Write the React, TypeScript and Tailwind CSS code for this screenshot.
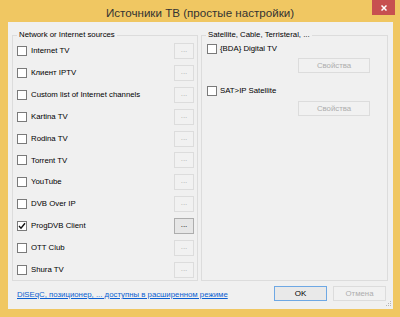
import React from 'react';

const networkSources = [
  { name: 'Internet TV', checked: false },
  { name: 'Клиент IPTV', checked: false },
  { name: 'Custom list of Internet channels', checked: false },
  { name: 'Kartina TV', checked: false },
  { name: 'Rodina TV', checked: false },
  { name: 'Torrent TV', checked: false },
  { name: 'YouTube', checked: false },
  { name: 'DVB Over IP', checked: false },
  { name: 'ProgDVB Client', checked: true },
  { name: 'OTT Club', checked: false },
  { name: 'Shura TV', checked: false },
];

function CheckBox({ checked }: { checked: boolean }) {
  return (
    <span className="flex h-[10px] w-[10px] shrink-0 items-center justify-center border border-[#7a7a7a] bg-white">
      {checked && (
        <svg width="8" height="8" viewBox="0 0 8 8">
          <path d="M1 4 L3 6.2 L7 1.2" fill="none" stroke="#111" strokeWidth="1.4" />
        </svg>
      )}
    </span>
  );
}

function DotsButton({ enabled }: { enabled: boolean }) {
  return (
    <button
      type="button"
      className={
        enabled
          ? 'flex h-[16px] w-[20px] items-center justify-center border border-[#adadad] bg-[#e6e6e6] pb-[2px] text-[8px] leading-none text-black'
          : 'flex h-[16px] w-[20px] items-center justify-center border border-[#dcdcdc] bg-[#f1f1f1] pb-[2px] text-[8px] leading-none text-[#b0b0b0]'
      }
    >
      ...
    </button>
  );
}

function PropsButton() {
  return (
    <button
      type="button"
      className="flex h-[15px] w-[72px] items-center justify-center border border-[#dcdcdc] bg-[#f1f1f1] text-[7.8px] leading-none text-[#adadad]"
    >
      Свойства
    </button>
  );
}

export default function App() {
  return (
    <div
      className="flex h-[317px] w-[400px] flex-col bg-[#f0c762]"
      style={{ fontFamily: '"Liberation Sans", Arial, sans-serif' }}
    >
      {/* Title bar */}
      <div className="relative flex h-[22px] shrink-0 items-center justify-center pt-[3px]">
        <span className="text-[11.6px] leading-none text-[#333]">Источники ТВ (простые настройки)</span>
        <div className="absolute right-[5px] top-0 flex h-[15px] w-[23px] items-center justify-center bg-[#c75050]">
          <svg width="6" height="6" viewBox="0 0 6 6">
            <path d="M0.5 0.5 L5.5 5.5 M5.5 0.5 L0.5 5.5" stroke="#fff" strokeWidth="1.5" />
          </svg>
        </div>
      </div>

      {/* Client area */}
      <div className="relative mx-[7px] mb-[8px] ml-[8px] flex flex-1 flex-col bg-[#f0f0f0] pl-[4px] pr-[5px] pt-[8px] text-[7.8px] text-black">
        <div className="flex gap-[3px]">
          {/* Network sources */}
          <fieldset className="h-[251px] w-[186px] border border-[#dcdcdc] pl-[4px] pr-[3px]">
            <legend className="px-[2px] leading-[10px]">Network or Internet sources</legend>
            {networkSources.map((s) => (
              <div key={s.name} className="flex h-[21.9px] items-center">
                <CheckBox checked={s.checked} />
                <span className="ml-[4px] flex-1 leading-none">{s.name}</span>
                <DotsButton enabled={s.checked} />
              </div>
            ))}
          </fieldset>

          {/* Satellite */}
          <fieldset className="h-[251px] w-[187px] border border-[#dcdcdc] pl-[4px] pr-[17px]">
            <legend className="px-[2px] leading-[10px]">Satellite, Cable, Terristeral, ...</legend>
            <div className="mt-[2px] flex h-[14px] items-center pl-[1px]">
              <CheckBox checked={false} />
              <span className="ml-[3px] leading-none">{'{BDA}'} Digital TV</span>
            </div>
            <div className="mt-[2px] flex justify-end">
              <PropsButton />
            </div>
            <div className="mt-[11px] flex h-[14px] items-center pl-[1px]">
              <CheckBox checked={false} />
              <span className="ml-[3px] leading-none">SAT&gt;IP Satellite</span>
            </div>
            <div className="mt-[3px] flex justify-end">
              <PropsButton />
            </div>
          </fieldset>
        </div>

        {/* Bottom row */}
        <div className="mt-[5px] flex items-start pl-[5px] pr-[2px]">
          <a href="#" className="mt-[5px] flex-1 leading-none text-[#0b5fd1] underline">
            DiSEqC, позиционер, ... доступны в расширенном режиме
          </a>
          <div className="flex gap-[6px]">
            <button
              type="button"
              className="flex h-[15px] w-[53px] items-center justify-center border border-[#6ea8e4] bg-[#e9e9e9] text-[8px] leading-none text-black"
            >
              OK
            </button>
            <button
              type="button"
              className="flex h-[15px] w-[53px] items-center justify-center border border-[#dcdcdc] bg-[#f1f1f1] text-[7.8px] leading-none text-[#adadad]"
            >
              Отмена
            </button>
          </div>
        </div>

        {/* Size grip */}
        <svg className="absolute bottom-[2px] right-[1px]" width="6" height="6" viewBox="0 0 6 6">
          <rect x="4" y="0" width="1" height="1" fill="#b5b5b5" />
          <rect x="2" y="2" width="1" height="1" fill="#b5b5b5" />
          <rect x="4" y="2" width="1" height="1" fill="#b5b5b5" />
          <rect x="0" y="4" width="1" height="1" fill="#b5b5b5" />
          <rect x="2" y="4" width="1" height="1" fill="#b5b5b5" />
          <rect x="4" y="4" width="1" height="1" fill="#b5b5b5" />
        </svg>
      </div>
    </div>
  );
}
